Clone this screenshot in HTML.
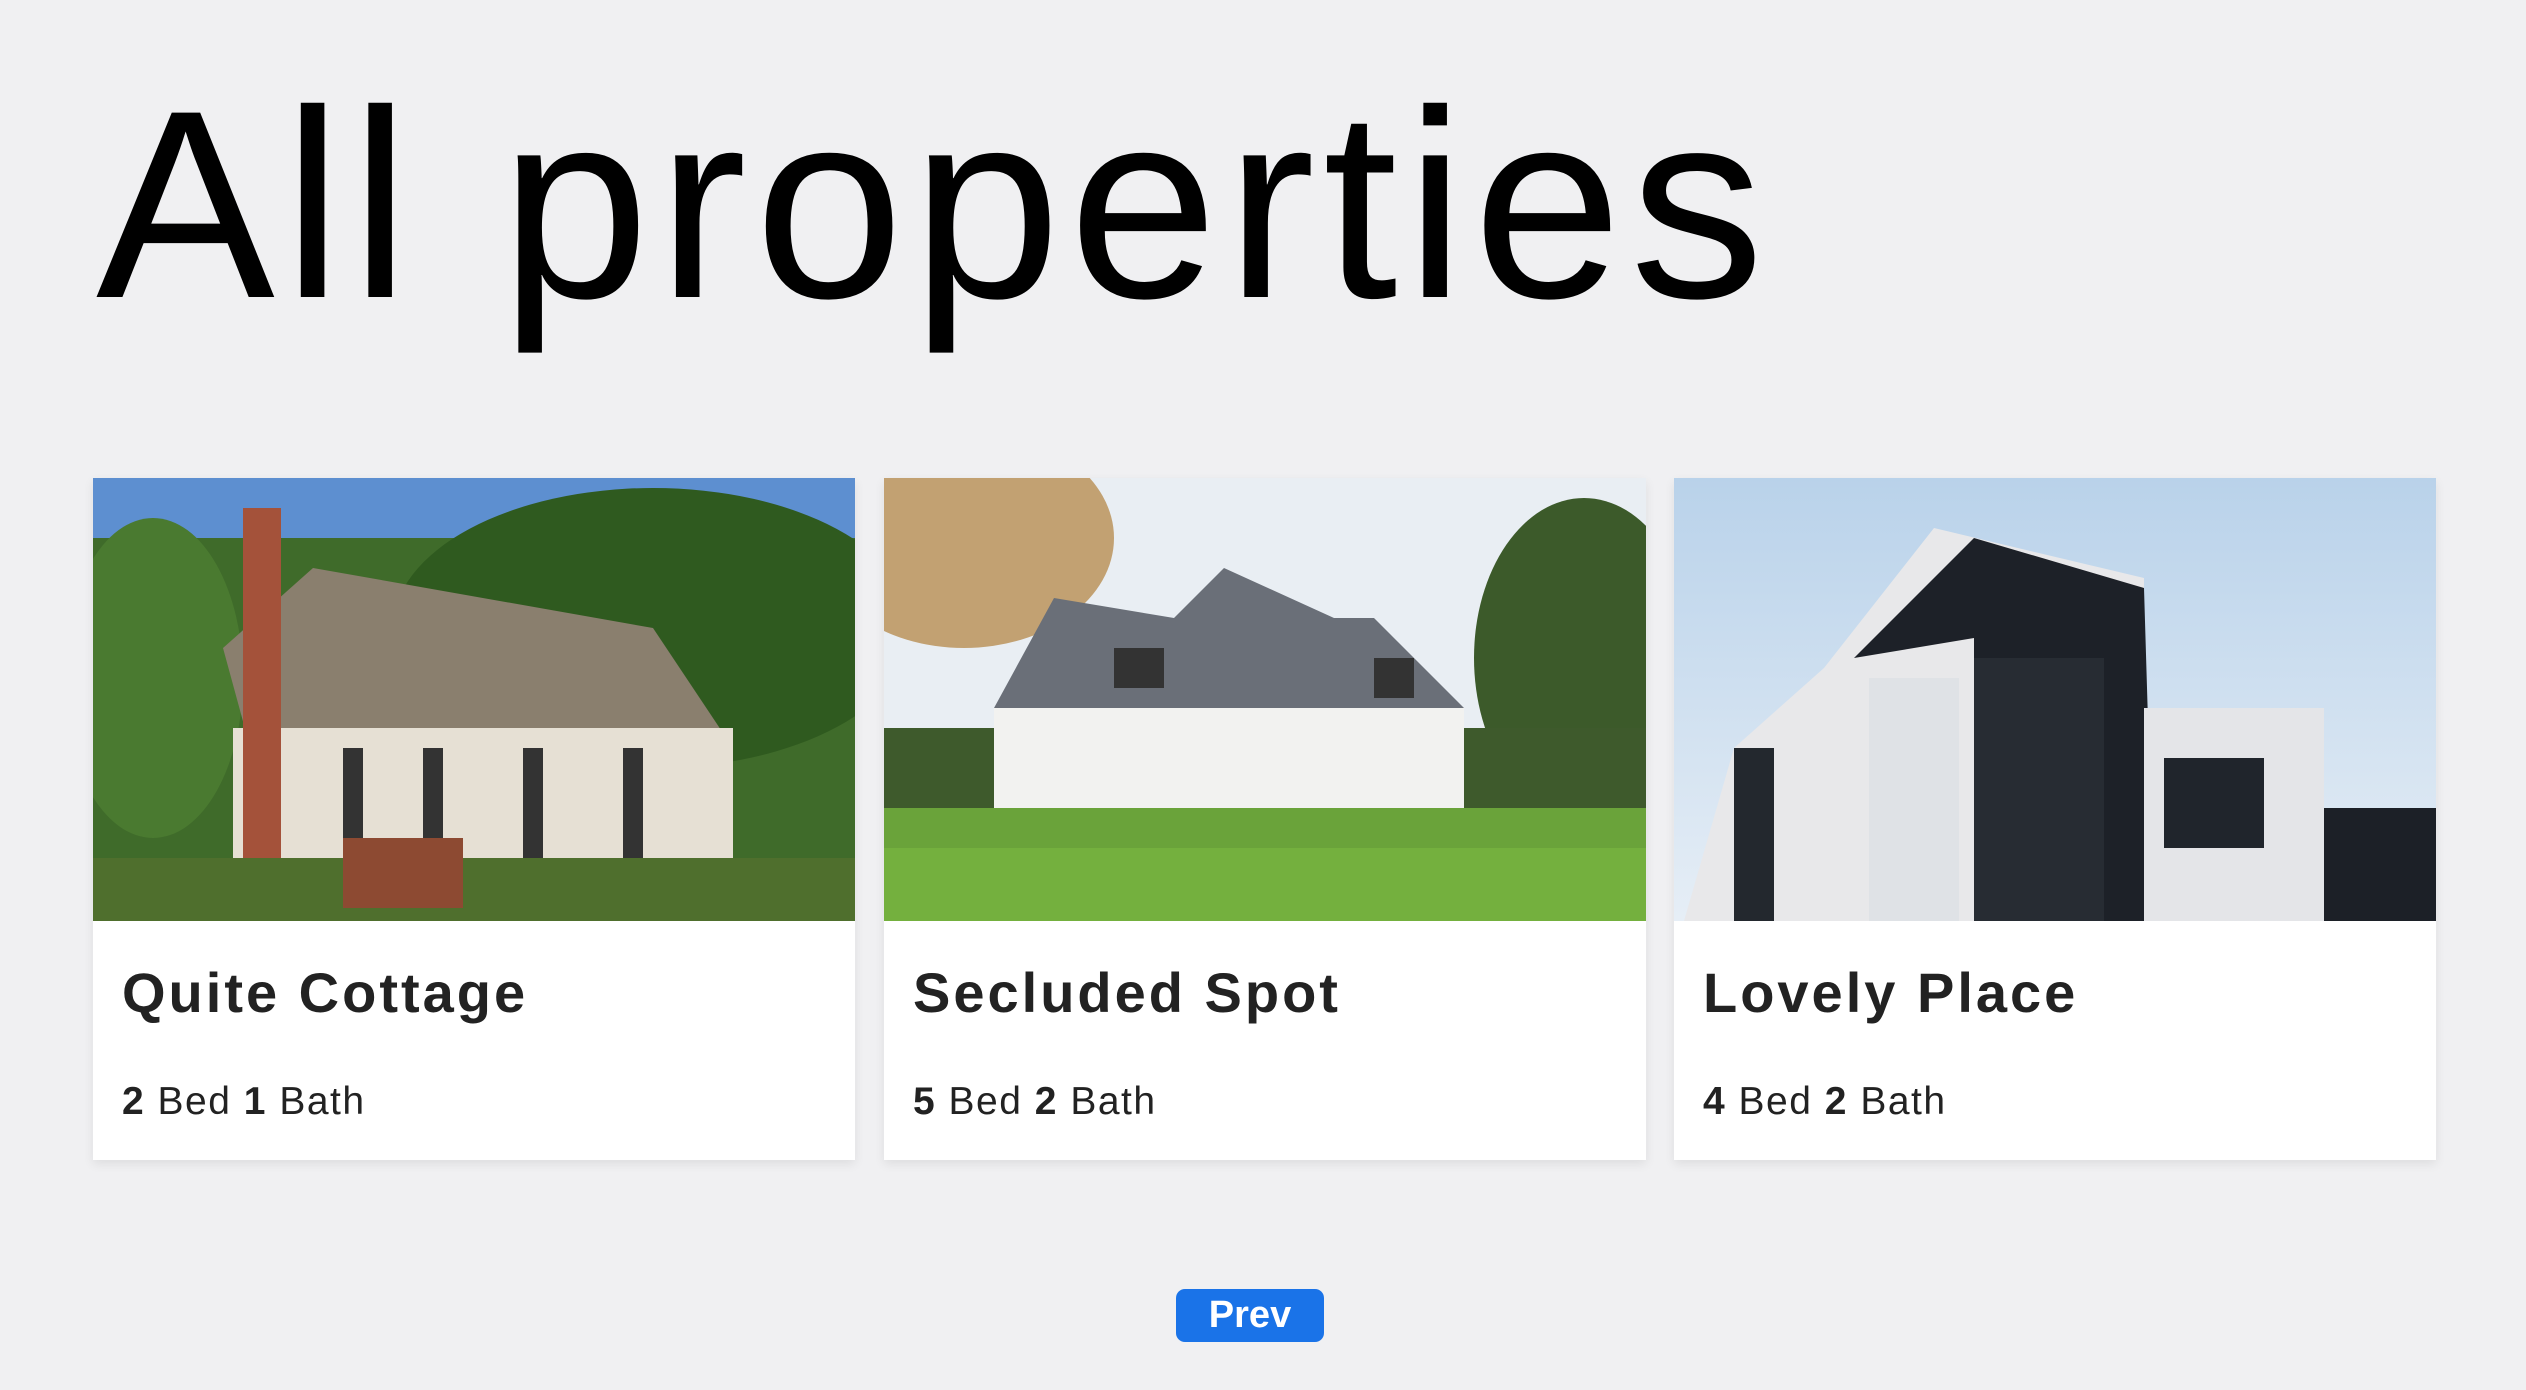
<!DOCTYPE html>
<html><head><meta charset="utf-8"><style>
html,body{margin:0;padding:0}
body{width:2526px;height:1390px;background:#f0f0f2;font-family:"Liberation Sans",sans-serif;position:relative;overflow:hidden}
h1{position:absolute;left:96px;top:44px;margin:0;font-size:268px;font-weight:400;letter-spacing:8px;color:#000;line-height:1.2}
.card{position:absolute;top:478px;width:762px;height:682px;background:#fff;box-shadow:0 4px 10px rgba(0,0,0,.08)}
.card svg{display:block;width:762px;height:443px}
.t{position:absolute;left:29px;top:482px;font-size:56px;font-weight:700;color:#222;letter-spacing:3px}
.s{position:absolute;left:29px;top:602px;font-size:39px;color:#222;letter-spacing:1.5px}
.s b{font-weight:700}
.btn{position:absolute;left:1176px;top:1289px;width:148px;height:53px;background:#1a73e8;border-radius:9px;color:#fff;font-weight:700;font-size:38px;text-align:center;line-height:53px}
</style></head><body>
<h1>All properties</h1>
<div class="card" style="left:93px">
<svg viewBox="0 0 762 443" preserveAspectRatio="none">
<rect width="762" height="443" fill="#5d8fd0"/>
<rect y="60" width="762" height="383" fill="#3f6b2a"/>
<ellipse cx="560" cy="150" rx="260" ry="140" fill="#2f5a1f"/>
<ellipse cx="60" cy="200" rx="90" ry="160" fill="#4a7a30"/>
<polygon points="130,170 220,90 560,150 640,270 160,280" fill="#8a7f6e"/>
<rect x="140" y="250" width="500" height="150" fill="#e6e0d4"/>
<rect x="150" y="30" width="38" height="380" fill="#a4523a"/>
<rect x="250" y="270" width="20" height="120" fill="#333"/><rect x="330" y="270" width="20" height="120" fill="#333"/><rect x="430" y="270" width="20" height="120" fill="#333"/><rect x="530" y="270" width="20" height="120" fill="#333"/>
<rect y="380" width="762" height="63" fill="#4f6f2d"/>
<rect x="250" y="360" width="120" height="70" fill="#8d4a32"/>
</svg>
<div class="t">Quite Cottage</div><div class="s"><b>2</b> Bed <b>1</b> Bath</div></div>
<div class="card" style="left:884px">
<svg viewBox="0 0 762 443" preserveAspectRatio="none">
<rect width="762" height="443" fill="#e9eef3"/>
<ellipse cx="80" cy="60" rx="150" ry="110" fill="#b0803a" opacity=".7"/>
<ellipse cx="700" cy="180" rx="110" ry="160" fill="#3c5a2a"/>
<rect y="250" width="762" height="80" fill="#3e5a2c"/>
<polygon points="110,230 170,120 290,140 340,90 450,140 490,140 580,230" fill="#6a6f78"/>
<rect x="110" y="230" width="470" height="120" fill="#f2f2f0"/>
<rect x="230" y="170" width="50" height="40" fill="#333"/><rect x="490" y="180" width="40" height="40" fill="#333"/>
<rect x="0" y="330" width="762" height="113" fill="#6aa33a"/>
<rect x="0" y="370" width="762" height="73" fill="#74b03e"/>
</svg>
<div class="t">Secluded Spot</div><div class="s"><b>5</b> Bed <b>2</b> Bath</div></div>
<div class="card" style="left:1674px">
<svg viewBox="0 0 762 443" preserveAspectRatio="none">
<defs><linearGradient id="g" x1="0" y1="0" x2="0" y2="1"><stop offset="0" stop-color="#b9d2ea"/><stop offset="1" stop-color="#e6eef6"/></linearGradient></defs>
<rect width="762" height="443" fill="url(#g)"/>
<polygon points="150,190 260,50 470,100 470,443 10,443 60,270" fill="#e8e8ea"/>
<polygon points="180,180 300,60 470,110 480,443 300,443 300,160" fill="#1d2128"/>
<rect x="195" y="200" width="90" height="243" fill="#dfe2e6"/>
<rect x="300" y="180" width="130" height="263" fill="#272c33"/>
<rect x="470" y="230" width="180" height="213" fill="#e4e5e8"/>
<rect x="490" y="280" width="100" height="90" fill="#20252c"/>
<rect x="650" y="330" width="112" height="113" fill="#1c2027"/>
<rect x="60" y="270" width="40" height="173" fill="#23282e"/>
</svg>
<div class="t">Lovely Place</div><div class="s"><b>4</b> Bed <b>2</b> Bath</div></div>
<div class="btn">Prev</div>
</body></html>
